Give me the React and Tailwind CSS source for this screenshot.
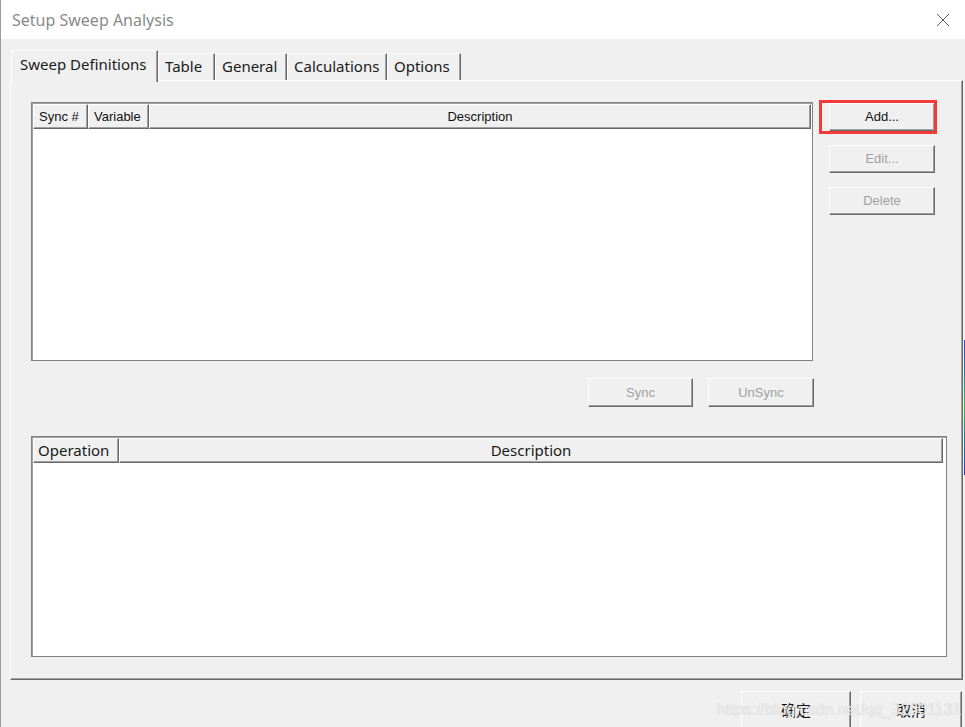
import React from "react";

const sans = { fontFamily: '"Liberation Sans", Arial, sans-serif' };
const ui = { fontFamily: '"Noto Sans", "Noto Sans CJK SC", sans-serif' };

// classic raised 3D button
function Btn({ children, disabled, className = "", style }) {
    return (
        <div
            className={`flex items-center justify-center bg-[#f0f0f0] border border-t-white border-l-white border-r-[#696969] border-b-[#696969] shadow-[inset_-1px_-1px_0_#a0a0a0] text-[13px] ${
                disabled ? "text-[#a0a0a0]" : "text-[#111]"
            } ${className}`}
            style={style || sans}
        >
            {children}
        </div>
    );
}

function HeadCell({ children, className = "", style }) {
    return (
        <div
            className={`h-full flex items-center bg-[#f0f0f0] border-t border-l border-t-white border-l-white border-r border-b border-r-[#696969] border-b-[#696969] shadow-[inset_-1px_-1px_0_#a0a0a0] ${className}`}
            style={style}
        >
            {children}
        </div>
    );
}

const tabs = [
    { label: "Table", w: "w-[57px]" },
    { label: "General", w: "w-[72px]" },
    { label: "Calculations", w: "w-[100px]" },
    { label: "Options", w: "w-[74px]" },
];

export default function App() {
    return (
        <div className="w-[965px] h-[727px] bg-[#f0f0f0] relative overflow-hidden border-l border-l-[#9c9c9c]">
            {/* TITLE BAR */}
            <div className="h-[39px] bg-white flex items-center justify-between pl-[11px] pr-[14px]">
                <span className="text-[16px] text-[#8a8a8a]" style={ui}>
                    Setup Sweep Analysis
                </span>
                <svg width="14" height="14" viewBox="0 0 14 14" className="mr-[1px]">
                    <path d="M1 1 L13 13 M13 1 L1 13" stroke="#5a5a5a" strokeWidth="1" fill="none" />
                </svg>
            </div>

            {/* BODY */}
            <div className="pl-[9px] pr-[2px] pt-[11px]">
                {/* TABS */}
                <div className="flex items-end h-[30px] pl-[1px] relative z-10">
                    <div
                        className="w-[147px] h-[32px] mb-[-2px] bg-[#f0f0f0] border-t border-l border-t-white border-l-white border-r border-r-[#696969] shadow-[inset_-1px_0_0_#a0a0a0] pl-[8px] pt-[2px] text-[15px] text-[#1a1a1a]"
                        style={ui}
                    >
                        Sweep Definitions
                    </div>
                    {tabs.map((t) => (
                        <div
                            key={t.label}
                            className={`${t.w} h-[27px] bg-[#f0f0f0] border-t border-t-white border-r border-r-[#696969] shadow-[inset_-1px_0_0_#a0a0a0,inset_1px_0_0_#fff] pl-[7px] pt-[1px] text-[15px] text-[#1a1a1a]`}
                            style={ui}
                        >
                            {t.label}
                        </div>
                    ))}
                </div>

                {/* PANEL */}
                <div className="h-[600px] border-t border-l border-t-white border-l-white border-r border-b border-r-[#696969] border-b-[#696969] shadow-[inset_-1px_-1px_0_#a0a0a0] pt-[21px] pl-[20px]">
                    <div className="flex">
                        {/* LIST 1 */}
                        <div className="w-[782px] h-[259px] bg-white border border-[#828282] shadow-[inset_1px_1px_0_#a0a0a0] p-[1px] flex flex-col">
                            <div className="h-[25px] flex text-[13px] text-[#111]" style={sans}>
                                <HeadCell className="w-[55px] pl-[5px]">Sync #</HeadCell>
                                <HeadCell className="w-[61px] pl-[5px]">Variable</HeadCell>
                                <HeadCell className="flex-1 justify-center">Description</HeadCell>
                            </div>
                        </div>

                        {/* SIDE BUTTONS */}
                        <div className="ml-[16px] pt-[1px] flex flex-col gap-[14px]">
                            <div className="relative">
                                <Btn className="w-[106px] h-[28px]">Add...</Btn>
                                <div className="absolute left-[-10px] top-[-3px] w-[118px] h-[34px] border-[3px] border-[#f23a3a]" />
                            </div>
                            <Btn disabled className="w-[106px] h-[28px]">Edit...</Btn>
                            <Btn disabled className="w-[106px] h-[28px]">Delete</Btn>
                        </div>
                    </div>

                    {/* SYNC ROW */}
                    <div className="w-[783px] flex justify-end gap-[15px] mt-[17px]">
                        <Btn disabled className="w-[105px] h-[29px]">Sync</Btn>
                        <Btn disabled className="w-[106px] h-[29px]">UnSync</Btn>
                    </div>

                    {/* LIST 2 */}
                    <div className="w-[916px] h-[221px] mt-[29px] bg-white border border-[#828282] shadow-[inset_1px_1px_0_#a0a0a0] p-[1px] flex flex-col">
                        <div className="h-[25px] flex text-[15px] text-[#1a1a1a] pr-[2px]" style={ui}>
                            <HeadCell className="w-[86px] pl-[4px]">Operation</HeadCell>
                            <HeadCell className="flex-1 justify-center">Description</HeadCell>
                        </div>
                    </div>
                </div>

                {/* DIALOG BUTTONS */}
                <div className="flex justify-end gap-[9px] mt-[11px] pr-[1px]">
                    <Btn className="w-[110px] h-[40px] pb-[2px] text-[15px]" style={ui}>确定</Btn>
                    <Btn className="w-[102px] h-[40px] pb-[2px] text-[15px]" style={ui}>取消</Btn>
                </div>
            </div>

            {/* WATERMARK */}
            <div
                className="absolute left-[716px] top-[698px] text-[16px] text-white/70 [text-shadow:0_0_1px_#b8b8b8] pointer-events-none"
                style={sans}
            >
                https://blog.csdn.net/qq_32601131
            </div>

            {/* desktop edge peeking on the right */}
            <div className="absolute right-0 top-[340px] w-[1px] h-[135px] bg-gradient-to-b from-[#3a3ad0] via-[#30b040] to-[#3030c0]" />
        </div>
    );
}
